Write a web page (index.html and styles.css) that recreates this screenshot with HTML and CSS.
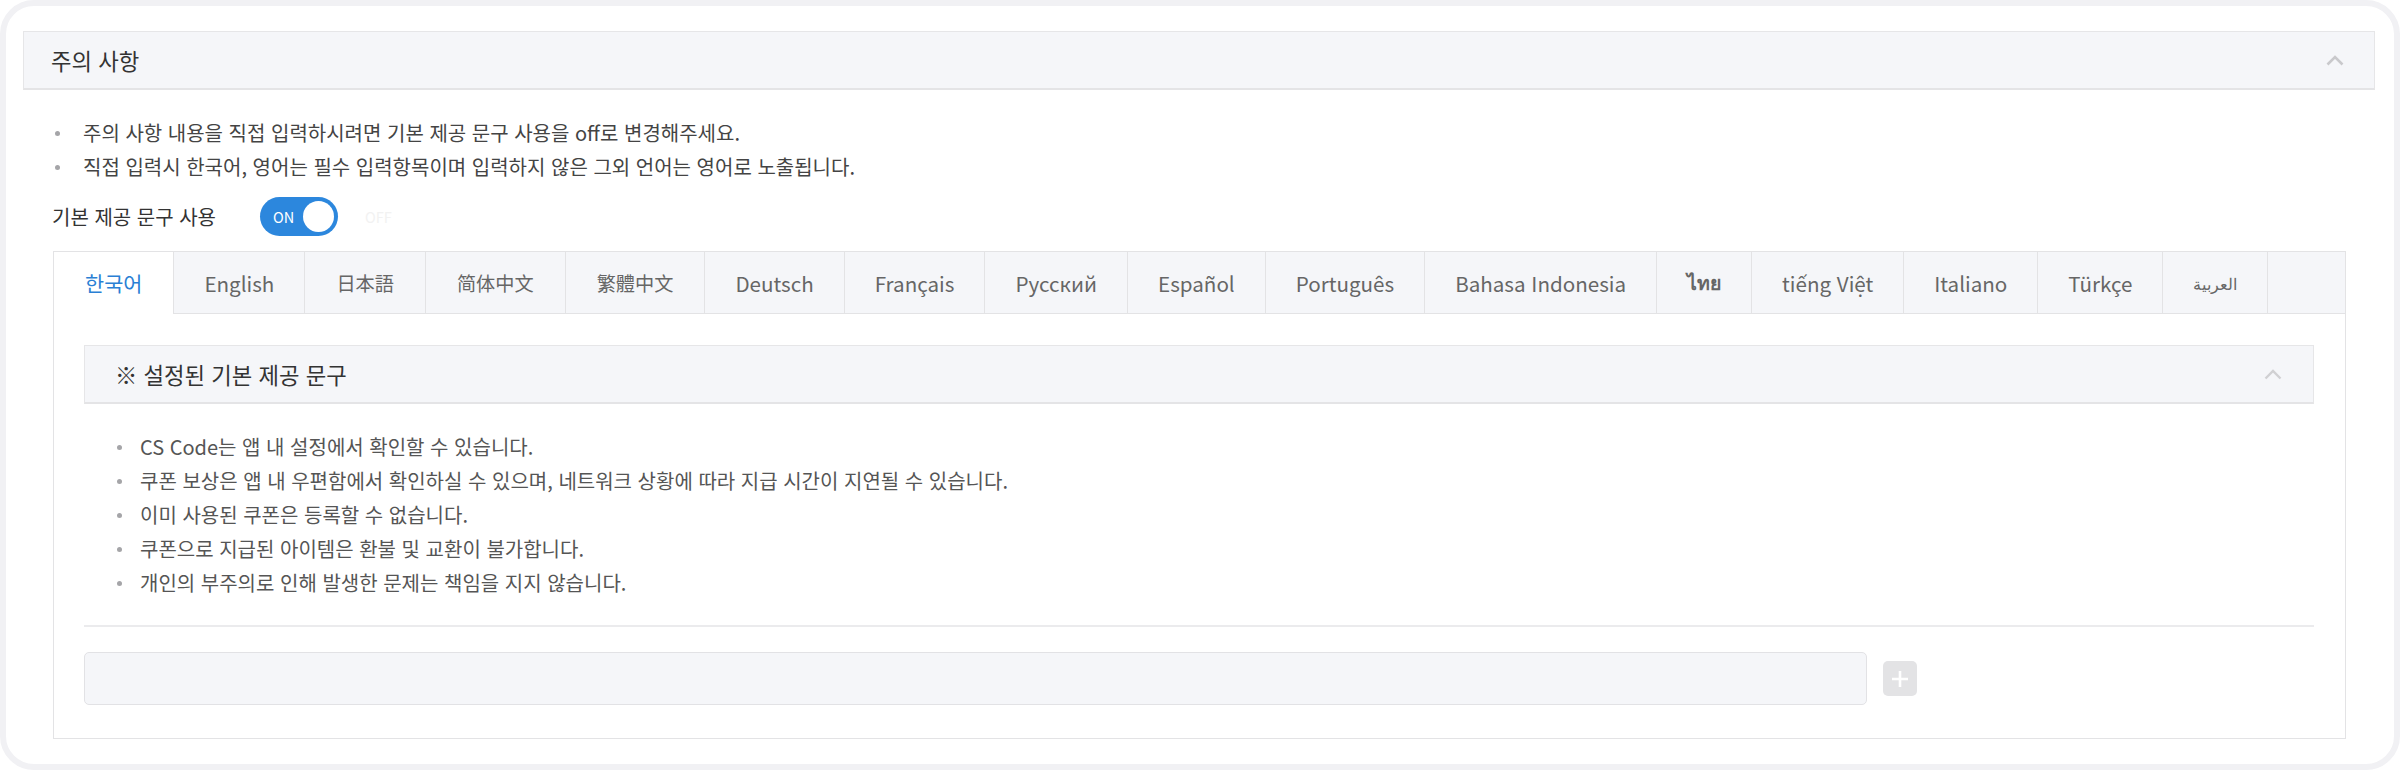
FILE: index.html
```html
<!DOCTYPE html>
<html lang="ko">
<head>
<meta charset="utf-8">
<title>주의 사항</title>
<link rel="stylesheet" href="styles.css">
</head>
<body>
<div class="card">
  <div class="section-head">
    <span class="section-title">주의 사항</span>
    <svg class="chev" width="18" height="11" viewBox="0 0 18 11"><polyline points="1.5,9.5 9,2 16.5,9.5" fill="none" stroke="#c9c9cc" stroke-width="2.6"/></svg>
  </div>
  <ul class="notes">
    <li>주의 사항 내용을 직접 입력하시려면 기본 제공 문구 사용을 off로 변경해주세요.</li>
    <li>직접 입력시 한국어, 영어는 필수 입력항목이며 입력하지 않은 그외 언어는 영어로 노출됩니다.</li>
  </ul>
  <div class="toggle-row">
    <span class="toggle-label">기본 제공 문구 사용</span>
    <span class="toggle"><span class="toggle-on">ON</span><span class="knob"></span></span>
    <span class="toggle-off">OFF</span>
  </div>
  <div class="panel">
    <div class="tabs">
      <span class="tab active">한국어</span>
      <span class="tab">English</span>
      <span class="tab tab-han" lang="ja">日本語</span>
      <span class="tab tab-han" lang="zh-CN">简体中文</span>
      <span class="tab tab-han" lang="zh-TW">繁體中文</span>
      <span class="tab">Deutsch</span>
      <span class="tab">Français</span>
      <span class="tab">Русский</span>
      <span class="tab">Español</span>
      <span class="tab">Português</span>
      <span class="tab">Bahasa Indonesia</span>
      <span class="tab tab-thai" lang="th">ไทย</span>
      <span class="tab">tiếng Việt</span>
      <span class="tab">Italiano</span>
      <span class="tab">Türkçe</span>
      <span class="tab tab-arabic" lang="ar">العربية</span>
    </div>
    <div class="panel-body">
      <div class="sub-head">
        <span class="sub-title">※ 설정된 기본 제공 문구</span>
        <svg class="chev" width="18" height="11" viewBox="0 0 18 11"><polyline points="1.5,9.5 9,2 16.5,9.5" fill="none" stroke="#d0d0d3" stroke-width="2.4"/></svg>
      </div>
      <ul class="defaults">
        <li>CS Code는 앱 내 설정에서 확인할 수 있습니다.</li>
        <li>쿠폰 보상은 앱 내 우편함에서 확인하실 수 있으며, 네트워크 상황에 따라 지급 시간이 지연될 수 있습니다.</li>
        <li>이미 사용된 쿠폰은 등록할 수 없습니다.</li>
        <li>쿠폰으로 지급된 아이템은 환불 및 교환이 불가합니다.</li>
        <li>개인의 부주의로 인해 발생한 문제는 책임을 지지 않습니다.</li>
      </ul>
      <div class="divider"></div>
      <div class="input-row">
        <div class="input"></div>
        <span class="add-btn"><svg width="20" height="20" viewBox="0 0 20 20"><path d="M10 2v16M2 10h16" stroke="#fff" stroke-width="2.6" fill="none"/></svg></span>
      </div>
    </div>
  </div>
</div>
</body>
</html>
```
FILE: styles.css
```css
* { box-sizing: border-box; }
html, body { margin: 0; padding: 0; background: #fff; }
body {
  font-family: "Noto Sans CJK KR", "Noto Sans", sans-serif;
  color: #444;
  width: 2400px;
  height: 770px;
}
.card {
  width: 2400px;
  height: 770px;
  border: 6px solid #f1f1f4;
  border-radius: 34px;
  padding: 25px 19px 0 17px;
  background: #fff;
}
.section-head {
  height: 59px;
  background: #f5f6f9;
  border: 1px solid #e6e6e8;
  border-bottom: 2px solid #e4e4e6;
  display: flex;
  align-items: center;
  justify-content: space-between;
  padding: 0 30px 0 27px;
}
.section-title { font-size: 22.3px; color: #333; }
.notes, .defaults {
  list-style: none;
  margin: 0;
  padding: 0;
}
.notes { margin-top: 26px; padding-left: 32px; }
.notes li, .defaults li {
  position: relative;
  font-size: 20px;
  line-height: 34px;
  padding-left: 28px;
  color: #444;
}
.notes li::before, .defaults li::before {
  content: "";
  position: absolute;
  left: 0;
  top: 15px;
  width: 5px;
  height: 5px;
  border-radius: 50%;
  background: #a5a5a8;
}
.toggle-row {
  display: flex;
  align-items: center;
  margin-top: 13px;
  padding-left: 29px;
  height: 39px;
}
.toggle-label { font-size: 20px; color: #333; width: 208px; }
.toggle {
  width: 78px;
  height: 39px;
  border-radius: 20px;
  background: #2c87dd;
  display: flex;
  align-items: center;
  justify-content: space-between;
  padding: 0 4px 0 13px;
}
.toggle-on { color: #fff; font-size: 14.5px; }
.knob {
  width: 31px;
  height: 31px;
  border-radius: 50%;
  background: #fff;
}
.toggle-off { color: #f2f2f2; font-size: 14.5px; margin-left: 27px; }
.panel {
  margin: 15px 0 0 30px;
  width: 2293px;
  border: 1px solid #e3e3e5;
}
.tabs {
  display: flex;
  height: 62px;
  background: #f5f6f9;
  border-bottom: 1px solid #e3e3e5;
}
.tab {
  display: flex;
  align-items: center;
  padding: 0 30px;
  font-size: 20.6px;
  color: #666;
  border-right: 1px solid #e3e3e5;
  white-space: nowrap;
}
.tab-han { font-size: 19.2px; padding: 0 31px; }
.tab-thai { font-size: 19.5px; font-weight: 700; padding: 0 30px; }
.tab-arabic { font-size: 15.5px; padding: 0 30px; }
.tab.active { background: #fff; color: #2a7fd4; height: 62px; padding: 0 31px; font-size: 20.8px; }
.panel-body { padding: 31px 31px 33px 30px; }
.sub-head {
  height: 59px;
  background: #f5f6f9;
  border: 1px solid #e6e6e8;
  border-bottom: 2px solid #e4e4e6;
  display: flex;
  align-items: center;
  justify-content: space-between;
  padding: 0 31px 0 30px;
}
.sub-title { font-size: 22.3px; color: #333; }
.defaults { margin-top: 26px; padding-left: 31px; }
.defaults li { padding-left: 25px; color: #555; }
.defaults li::before { left: 2px; }
.divider { height: 2px; background: #ebebed; margin-top: 25px; }
.input-row {
  display: flex;
  align-items: center;
  margin-top: 25px;
  gap: 16px;
}
.input {
  width: 1783px;
  height: 53px;
  background: #f5f6f9;
  border: 1.5px solid #e2e2e5;
  border-radius: 5px;
}
.add-btn {
  width: 34px;
  height: 35px;
  border-radius: 5px;
  background: #e3e3e5;
  display: flex;
  align-items: center;
  justify-content: center;
}
```
